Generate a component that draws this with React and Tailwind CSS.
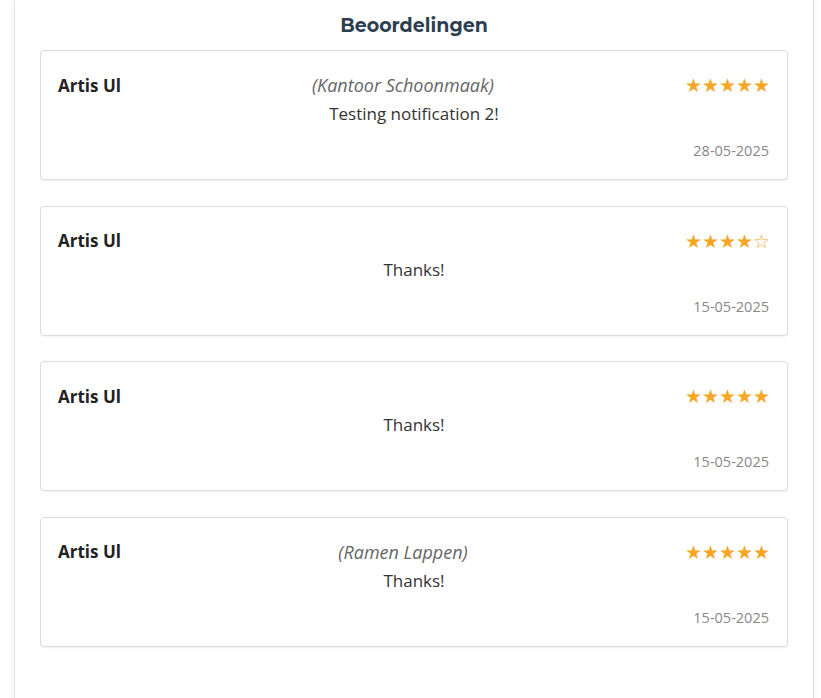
const reviews = [
  { name: 'Artis Ul', service: 'Kantoor Schoonmaak', rating: 5, text: 'Testing notification 2!', date: '28-05-2025' },
  { name: 'Artis Ul', service: null, rating: 4, text: 'Thanks!', date: '15-05-2025' },
  { name: 'Artis Ul', service: null, rating: 5, text: 'Thanks!', date: '15-05-2025' },
  { name: 'Artis Ul', service: 'Ramen Lappen', rating: 5, text: 'Thanks!', date: '15-05-2025' },
];

function Stars({ rating }) {
  return (
    <span className="text-[19px] leading-[27px] text-[#f5a623]">
      {'★'.repeat(rating)}
      {'☆'.repeat(5 - rating)}
    </span>
  );
}

function ReviewCard({ review }) {
  return (
    <div className="bg-white border border-[#dcdcdc] rounded-[4px] shadow-[0_1px_2px_rgba(0,0,0,0.06)] pt-[21px] pb-[17px] px-[17px] mb-[25.5px]">
      <div className="flex justify-between items-center h-[27px]">
        <span className="font-bold text-[17px] text-[#222]">{review.name}</span>
        {review.service && (
          <span className="italic text-[18px] text-[#666]">({review.service})</span>
        )}
        <Stars rating={review.rating} />
      </div>
      <p className="text-center text-[17px] leading-[25px] text-[#333] mt-[2px]">{review.text}</p>
      <div className="text-right text-[14.5px] leading-[22px] text-[#888] mt-[14px] mr-[1px]">{review.date}</div>
    </div>
  );
}

export default function App() {
  return (
    <div className="min-h-[698px] bg-white pl-[14px] pr-[7px] overflow-hidden" style={{ fontFamily: '"Open Sans", sans-serif' }}>
      <div className="bg-white border border-[#e2e2e2] border-t-0 rounded-b-[6px] shadow-[0_0_6px_rgba(0,0,0,0.08)] min-h-[710px] px-[25px] pt-[11px] pb-[24px]">
        <h2
          className="text-center text-[19px] font-bold text-[#2c3e50] leading-[30px] mb-[9px]"
          style={{ fontFamily: '"Montserrat", "Lato", sans-serif' }}
        >
          Beoordelingen
        </h2>
        {reviews.map((r, i) => (
          <ReviewCard key={i} review={r} />
        ))}
      </div>
    </div>
  );
}
